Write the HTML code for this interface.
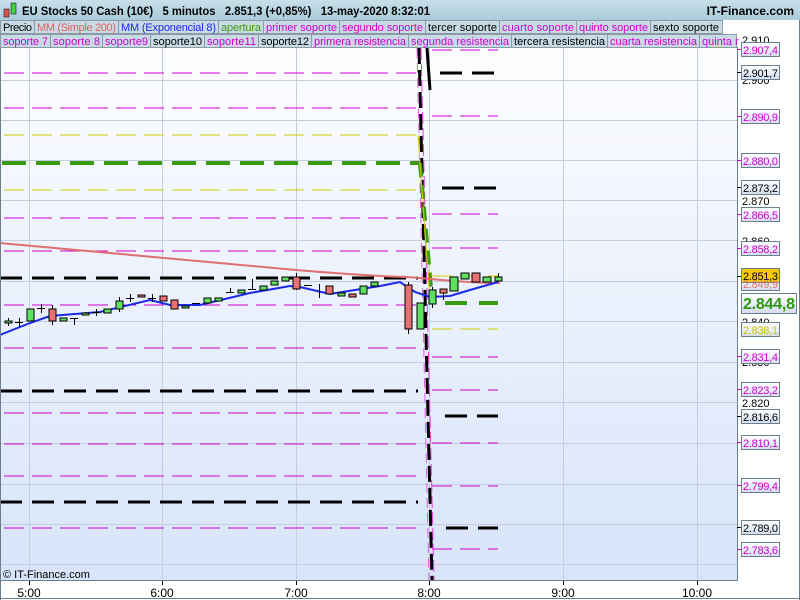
<!DOCTYPE html>
<html><head><meta charset="utf-8"><style>
body{margin:0;width:800px;height:600px;overflow:hidden;font-family:"Liberation Sans",sans-serif;background:#fff}
svg{display:block}
</style></head><body>
<svg width="800" height="600" xmlns="http://www.w3.org/2000/svg" font-family="Liberation Sans, sans-serif">
<defs>
<linearGradient id="bg" x1="0" y1="0" x2="0" y2="1"><stop offset="0" stop-color="#ffffff"/><stop offset="1" stop-color="#d8e4fa"/></linearGradient>
<linearGradient id="hd" x1="0" y1="0" x2="0" y2="1"><stop offset="0" stop-color="#c9e0ea"/><stop offset="1" stop-color="#a9cbd9"/></linearGradient>
<linearGradient id="lb" x1="0" y1="0" x2="0" y2="1"><stop offset="0" stop-color="#ffffff"/><stop offset="1" stop-color="#d4dcf0"/></linearGradient>
</defs>
<rect x="0" y="0" width="737" height="581" fill="url(#bg)"/>
<rect x="737" y="0" width="63" height="600" fill="#fff"/>
<g stroke="#c4cede" stroke-width="1">
<line x1="29.5" y1="47" x2="29.5" y2="581"/><line x1="162.5" y1="47" x2="162.5" y2="581"/><line x1="296.5" y1="47" x2="296.5" y2="581"/><line x1="429.5" y1="47" x2="429.5" y2="581"/><line x1="563.5" y1="47" x2="563.5" y2="581"/><line x1="697.5" y1="47" x2="697.5" y2="581"/>
<line x1="0" y1="80.5" x2="737" y2="80.5"/><line x1="0" y1="120.5" x2="737" y2="120.5"/><line x1="0" y1="160.5" x2="737" y2="160.5"/><line x1="0" y1="200.5" x2="737" y2="200.5"/><line x1="0" y1="240.5" x2="737" y2="240.5"/><line x1="0" y1="281.5" x2="737" y2="281.5"/><line x1="0" y1="321.5" x2="737" y2="321.5"/><line x1="0" y1="362.5" x2="737" y2="362.5"/><line x1="0" y1="402.5" x2="737" y2="402.5"/><line x1="0" y1="443.5" x2="737" y2="443.5"/><line x1="0" y1="484.5" x2="737" y2="484.5"/><line x1="0" y1="524.5" x2="737" y2="524.5"/><line x1="0" y1="564.5" x2="737" y2="564.5"/>
</g>
<g fill="none" stroke="#d000d0" stroke-width="1" stroke-dasharray="20,8">
<path d="M4 73H418"/><path d="M4 108H418"/><path d="M4 218H418"/><path d="M4 251H418"/><path d="M4 305H418"/><path d="M4 348H418"/><path d="M4 413H418"/><path d="M4 444H418"/><path d="M4 476H418"/><path d="M4 528H418"/>
</g>
<g fill="none" stroke="#d0d000" stroke-width="1" stroke-dasharray="20,8"><path d="M4 135H418"/><path d="M4 190H418"/></g>
<path d="M2 163H420" stroke="#3a9a10" stroke-width="4" stroke-dasharray="24,10" fill="none"/>
<g fill="none" stroke="#000" stroke-width="3" stroke-dasharray="22,10"><path d="M0 278H418"/><path d="M0 391H418"/><path d="M0 502H418"/></g>
<g fill="none" stroke="#d000d0" stroke-width="1" stroke-dasharray="20,8">
<path d="M432 50H498"/><path d="M432 116H498"/><path d="M432 214H498"/><path d="M432 248H498"/><path d="M432 357H498"/><path d="M432 390H498"/><path d="M432 443H498"/><path d="M432 486H498"/><path d="M432 549H498"/>
</g>
<path d="M432 329H498" stroke="#d0d000" stroke-dasharray="20,8"/>
<path d="M432 276H498" stroke="#d0d000" stroke-dasharray="20,8"/>
<path d="M445 303H498" stroke="#3a9a10" stroke-width="4" stroke-dasharray="22,12"/>
<g fill="none" stroke="#000" stroke-width="3" stroke-dasharray="22,10"><path d="M440 73H498"/><path d="M442 188H498"/><path d="M445 416H498"/><path d="M446 528H498"/></g>
<path d="M419 48L432 580" stroke="#000" stroke-width="3" stroke-dasharray="16,6" fill="none"/>
<path d="M427 48L430 90" stroke="#000" stroke-width="3" fill="none"/>
<path d="M421 48L434 580" stroke="#e040e0" stroke-width="1" stroke-dasharray="12,4" fill="none"/>
<path d="M417 48L429 580" stroke="#e060e0" stroke-width="1" stroke-dasharray="10,5" fill="none"/>
<path d="M420 163L432 300" stroke="#3a9a10" stroke-width="4" stroke-dasharray="14,8" fill="none"/>
<path d="M418 135L430 300" stroke="#d0d000" stroke-width="1" fill="none"/>
<path d="M0 243 C100 252 200 262 296 270 S400 276 420 278 S470 283 500 283" stroke="#e07070" stroke-width="2" fill="none"/>
<path d="M0 335 L30 323 L50 316 L100 312 L150 300 L170 305 L200 305 L250 293 L290 286 L300 287 L330 294 L380 286 L400 282 L415 292 L430 297 L450 296 L470 290 L498 282" stroke="#1a2ae8" stroke-width="2" fill="none"/>
<g stroke="#000" stroke-width="1">
<line x1="8.5" y1="318" x2="8.5" y2="326"/><rect x="5" y="321" width="7" height="2" fill="#60e060"/>
<line x1="15" y1="322.5" x2="23" y2="322.5"/><line x1="19.5" y1="318" x2="19.5" y2="327"/>
<rect x="27" y="309" width="7" height="12" fill="#60e060"/>
<line x1="37" y1="308.5" x2="45" y2="308.5"/><line x1="41.5" y1="304" x2="41.5" y2="313"/>
<line x1="52.5" y1="305" x2="52.5" y2="325"/><rect x="49" y="309" width="7" height="12" fill="#e87070"/>
<rect x="60" y="318" width="7" height="3" fill="#60e060"/>
<line x1="70" y1="318.5" x2="78" y2="318.5"/><line x1="74.5" y1="318" x2="74.5" y2="325"/>
<rect x="82" y="313" width="7" height="2" fill="#60e060"/>
<line x1="92" y1="312.5" x2="100" y2="312.5"/><line x1="96.5" y1="309" x2="96.5" y2="316"/>
<rect x="104" y="309" width="7" height="4" fill="#60e060"/>
<line x1="119.5" y1="297" x2="119.5" y2="312"/><rect x="116" y="301" width="7" height="8" fill="#60e060"/>
<line x1="126" y1="298.5" x2="134" y2="298.5"/><line x1="130.5" y1="294" x2="130.5" y2="302"/>
<rect x="138" y="295" width="7" height="2" fill="#e87070"/>
<line x1="148" y1="298.5" x2="156" y2="298.5"/><line x1="152.5" y1="294" x2="152.5" y2="302"/>
<rect x="160" y="296" width="7" height="5" fill="#e87070"/>
<rect x="171" y="300" width="7" height="9" fill="#e87070"/>
<rect x="182" y="306" width="7" height="2" fill="#60e060"/>
<line x1="192" y1="303.5" x2="200" y2="303.5"/>
<rect x="204" y="298" width="7" height="5" fill="#60e060"/>
<rect x="215" y="298" width="7" height="3" fill="#60e060"/>
<line x1="226" y1="292.5" x2="234" y2="292.5"/><line x1="230.5" y1="288" x2="230.5" y2="293"/>
<rect x="238" y="290" width="7" height="3" fill="#60e060"/>
<line x1="248" y1="289.5" x2="256" y2="289.5"/><line x1="252.5" y1="279" x2="252.5" y2="290"/>
<rect x="260" y="286" width="7" height="4" fill="#60e060"/>
<rect x="271" y="281" width="7" height="4" fill="#60e060"/>
<rect x="282" y="277" width="7" height="4" fill="#60e060"/>
<line x1="296.5" y1="273" x2="296.5" y2="290"/><rect x="293" y="277" width="7" height="12" fill="#e87070"/>
<line x1="304" y1="285.5" x2="312" y2="285.5"/>
<line x1="319.5" y1="284" x2="319.5" y2="298"/>
<rect x="326" y="286" width="7" height="8" fill="#e87070"/>
<rect x="338" y="293" width="7" height="3" fill="#60e060"/>
<rect x="349" y="294" width="7" height="3" fill="#e87070"/>
<rect x="360" y="286" width="7" height="8" fill="#60e060"/>
<rect x="371" y="282" width="7" height="4" fill="#60e060"/>
<line x1="408.5" y1="282" x2="408.5" y2="334"/><rect x="405" y="285" width="7" height="44" fill="#e87070"/>
<rect x="417" y="303" width="7" height="26" fill="#60e060"/>
<line x1="432.5" y1="287" x2="432.5" y2="308"/><rect x="429" y="290" width="7" height="14" fill="#60e060"/>
<line x1="443.5" y1="289" x2="443.5" y2="300"/><rect x="440" y="289" width="7" height="4" fill="#e87070"/>
<rect x="450" y="277" width="8" height="14" fill="#60e060"/>
<rect x="461" y="273" width="8" height="6" fill="#60e060"/>
<rect x="472" y="273" width="8" height="9" fill="#e87070"/>
<rect x="483" y="277" width="8" height="5" fill="#60e060"/>
<line x1="498.5" y1="273" x2="498.5" y2="282"/><rect x="495" y="277" width="7" height="4" fill="#60e060"/>
</g>
<line x1="737.5" y1="47" x2="737.5" y2="581" stroke="#6a7e8c"/>
<line x1="0" y1="580.5" x2="737" y2="580.5" stroke="#6a7e8c"/>
<line x1="0.5" y1="0" x2="0.5" y2="600" stroke="#6a7e8c"/>
<line x1="0" y1="598.5" x2="800" y2="598.5" stroke="#6a7e8c"/>
<line x1="799.5" y1="0" x2="799.5" y2="600" stroke="#6a7e8c"/>
<g stroke="#000"><line x1="29.5" y1="581" x2="29.5" y2="585"/><line x1="162.5" y1="581" x2="162.5" y2="585"/><line x1="296.5" y1="581" x2="296.5" y2="585"/><line x1="429.5" y1="581" x2="429.5" y2="585"/><line x1="563.5" y1="581" x2="563.5" y2="585"/><line x1="697.5" y1="581" x2="697.5" y2="585"/></g>
<g font-size="12" fill="#000" text-anchor="middle"><text x="29" y="597">5:00</text><text x="162" y="597">6:00</text><text x="296" y="597">7:00</text><text x="429" y="597">8:00</text><text x="563" y="597">9:00</text><text x="697" y="597">10:00</text></g>
<text x="3" y="578" font-size="11" fill="#000">© IT-Finance.com</text>
<g font-size="11" fill="#000"><text x="742" y="44">2.910</text><text x="742" y="84">2.900</text><text x="742" y="205">2.870</text><text x="742" y="245">2.860</text><text x="742" y="326">2.840</text><text x="742" y="366">2.830</text><text x="742" y="407">2.820</text></g>
<g font-size="11">
<g stroke="#6a7e8c" fill="url(#lb)">
<rect x="741.5" y="42.5" width="38" height="14"/><rect x="741.5" y="65.5" width="38" height="14"/><rect x="741.5" y="109.5" width="38" height="14"/><rect x="741.5" y="153.5" width="38" height="14"/><rect x="741.5" y="180.5" width="38" height="14"/><rect x="741.5" y="207.5" width="38" height="14"/><rect x="741.5" y="241.5" width="38" height="14"/><rect x="741.5" y="276.5" width="38" height="14"/><rect x="741.5" y="322.5" width="38" height="14"/><rect x="741.5" y="349.5" width="38" height="14"/><rect x="741.5" y="382.5" width="38" height="14"/><rect x="741.5" y="409.5" width="38" height="14"/><rect x="741.5" y="435.5" width="38" height="14"/><rect x="741.5" y="478.5" width="38" height="14"/><rect x="741.5" y="520.5" width="38" height="14"/><rect x="741.5" y="542.5" width="38" height="14"/>
</g>
<rect x="741.5" y="268.5" width="38" height="14" fill="#f8c800" stroke="#6a7e8c"/>
<rect x="741.5" y="293.5" width="55" height="20" fill="url(#lb)" stroke="#6a7e8c"/>
<g stroke="#000"><path d="M737 49.5h4M737 72.5h4M737 187.5h4M737 276.5h4M737 416.5h4M737 527.5h4"/></g>
<g stroke="#d000d0"><path d="M737 49.5h4M737 116.5h4M737 160.5h4M737 214.5h4M737 248.5h4M737 356.5h4M737 389.5h4M737 442.5h4M737 485.5h4M737 549.5h4"/></g>
<text x="743" y="54" fill="#d000d0" textLength="35">2.907,4</text>
<text x="743" y="77" fill="#000" textLength="35">2.901,7</text>
<text x="743" y="121" fill="#d000d0" textLength="35">2.890,9</text>
<text x="743" y="165" fill="#d000d0" textLength="35">2.880,0</text>
<text x="743" y="192" fill="#000" textLength="35">2.873,2</text>
<text x="743" y="219" fill="#d000d0" textLength="35">2.866,5</text>
<text x="743" y="253" fill="#d000d0" textLength="35">2.858,2</text>
<text x="743" y="288" fill="#e07070" textLength="35">2.849,9</text>
<text x="743" y="280" fill="#000" textLength="35">2.851,3</text>
<text x="743" y="309" fill="#2e9a10" font-size="16" font-weight="bold" textLength="52">2.844,8</text>
<text x="743" y="334" fill="#c8c800" textLength="35">2.838,1</text>
<text x="743" y="361" fill="#d000d0" textLength="35">2.831,4</text>
<text x="743" y="394" fill="#d000d0" textLength="35">2.823,2</text>
<text x="743" y="421" fill="#000" textLength="35">2.816,6</text>
<text x="743" y="447" fill="#d000d0" textLength="35">2.810,1</text>
<text x="743" y="490" fill="#d000d0" textLength="35">2.799,4</text>
<text x="743" y="532" fill="#000" textLength="35">2.789,0</text>
<text x="743" y="554" fill="#d000d0" textLength="35">2.783,6</text>
</g>
<rect x="0" y="0" width="800" height="20" fill="url(#hd)"/>
<rect x="4" y="9" width="5" height="8" fill="#e05050" stroke="#000" stroke-width=".5"/><rect x="11" y="3" width="5" height="11" fill="#40d040" stroke="#000" stroke-width=".5"/>
<text x="22" y="15" font-size="12" font-weight="bold" fill="#000" xml:space="preserve" textLength="408" lengthAdjust="spacingAndGlyphs">EU Stocks 50 Cash (10€)   5 minutos   2.851,3 (+0,85%)   13-may-2020 8:32:01</text>
<text x="794" y="15" font-size="12" font-weight="bold" fill="#000" text-anchor="end">IT-Finance.com</text>
<rect x="0" y="20" width="737" height="27" fill="#fff"/>
<g stroke="#8a9aa6">
<rect x="0.5" y="20.5" width="34" height="13" fill="#c8dae4"/><rect x="34.5" y="20.5" width="84" height="13" fill="#c8dae4"/><rect x="118.5" y="20.5" width="100" height="13" fill="#c8dae4"/><rect x="218.5" y="20.5" width="45" height="13" fill="#c8dae4"/><rect x="263.5" y="20.5" width="76" height="13" fill="#c8dae4"/><rect x="339.5" y="20.5" width="86" height="13" fill="#c8dae4"/><rect x="425.5" y="20.5" width="74" height="13" fill="#c8dae4"/><rect x="499.5" y="20.5" width="77" height="13" fill="#c8dae4"/><rect x="576.5" y="20.5" width="74" height="13" fill="#c8dae4"/><rect x="650.5" y="20.5" width="72" height="13" fill="#c8dae4"/>
<rect x="0.5" y="34.5" width="50" height="13" fill="#c8dae4"/><rect x="50.5" y="34.5" width="52" height="13" fill="#c8dae4"/><rect x="102.5" y="34.5" width="48" height="13" fill="#c8dae4"/><rect x="150.5" y="34.5" width="54" height="13" fill="#c8dae4"/><rect x="204.5" y="34.5" width="54" height="13" fill="#c8dae4"/><rect x="258.5" y="34.5" width="53" height="13" fill="#c8dae4"/><rect x="311.5" y="34.5" width="97" height="13" fill="#c8dae4"/><rect x="408.5" y="34.5" width="103" height="13" fill="#c8dae4"/><rect x="511.5" y="34.5" width="96" height="13" fill="#c8dae4"/><rect x="607.5" y="34.5" width="92" height="13" fill="#c8dae4"/><rect x="699.5" y="34.5" width="37" height="13" fill="#c8dae4"/>
</g>
<g font-size="11" lengthAdjust="spacingAndGlyphs">
<text x="3" y="31" fill="#000" textLength="29">Precio</text><text x="37" y="31" fill="#e06060" textLength="79">MM (Simple 200)</text><text x="121" y="31" fill="#1a2ae8" textLength="95">MM (Exponencial 8)</text><text x="221" y="31" fill="#3a9a10" textLength="40">apertura</text><text x="266" y="31" fill="#d000d0" textLength="71">primer soporte</text><text x="342" y="31" fill="#d000d0" textLength="81">segundo soporte</text><text x="428" y="31" fill="#000" textLength="69">tercer soporte</text><text x="502" y="31" fill="#d000d0" textLength="72">cuarto soporte</text><text x="579" y="31" fill="#d000d0" textLength="69">quinto soporte</text><text x="653" y="31" fill="#000" textLength="66">sexto soporte</text>
<text x="3" y="45" fill="#d000d0" textLength="45">soporte 7</text><text x="53" y="45" fill="#d000d0" textLength="47">soporte 8</text><text x="105" y="45" fill="#d000d0" textLength="43">soporte9</text><text x="153" y="45" fill="#000" textLength="49">soporte10</text><text x="207" y="45" fill="#d000d0" textLength="49">soporte11</text><text x="261" y="45" fill="#000" textLength="48">soporte12</text><text x="314" y="45" fill="#d000d0" textLength="92">primera resistencia</text><text x="411" y="45" fill="#d000d0" textLength="98">segunda resistencia</text><text x="514" y="45" fill="#000" textLength="91">tercera resistencia</text><text x="610" y="45" fill="#d000d0" textLength="87">cuarta resistencia</text><text x="702" y="45" fill="#d000d0">quinta r</text>
</g>
</svg>
</body></html>
